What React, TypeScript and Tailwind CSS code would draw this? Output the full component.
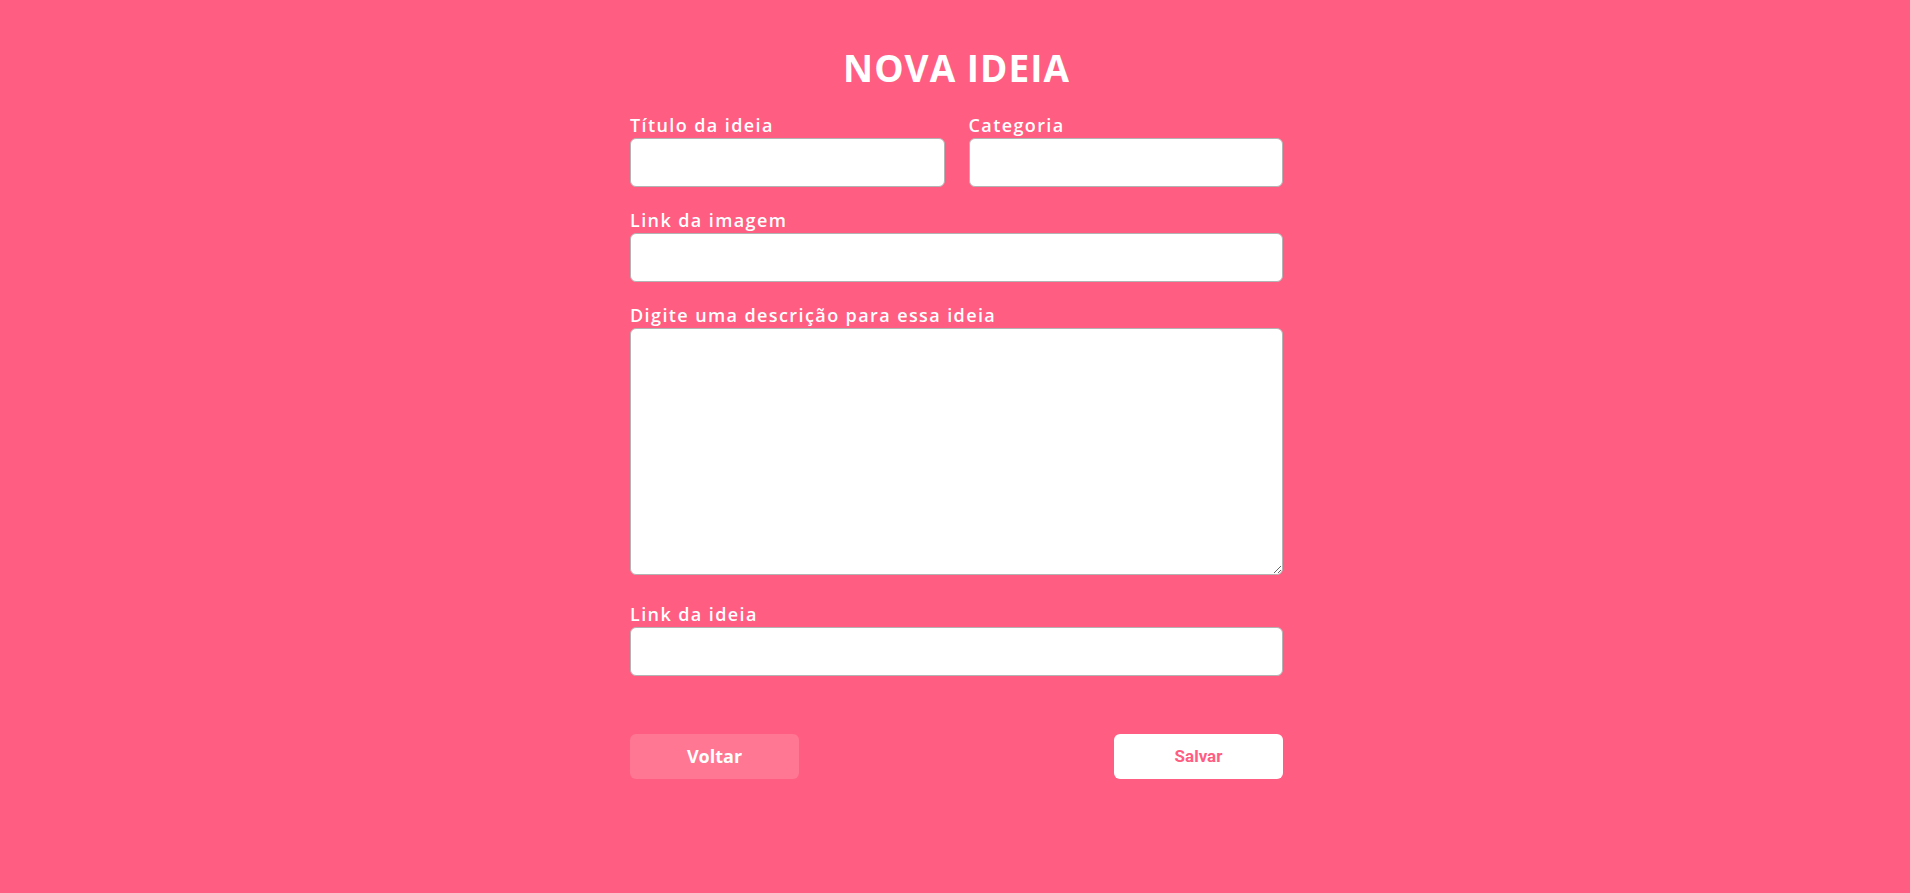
import React from "react";

const labelCls =
  "block h-[22px] whitespace-nowrap text-white font-semibold text-[18px] leading-[22px] tracking-[1.4px] [font-family:'Open_Sans',sans-serif]";
const inputCls =
  "block w-full h-[49px] bg-white rounded-[6px] border border-[#b3b3b3] outline-none mt-[2px]";

export default function App() {
  return (
    <div className="min-h-screen w-full bg-[#ff5e82]">
      <div className="flex justify-center pl-[3px]">
        <div className="w-[653px] pt-[46px]">
          <h1 className="text-center text-white font-bold text-[37px] leading-[44px] tracking-[1px] [font-family:'Open_Sans',sans-serif]">
            NOVA IDEIA
          </h1>
          <div className="mt-[24px] grid grid-cols-2 gap-x-[24px]">
            <div>
              <label className={labelCls}>Título da ideia</label>
              <input className={inputCls} />
            </div>
            <div>
              <label className={labelCls}>Categoria</label>
              <input className={inputCls} />
            </div>
          </div>
          <div className="mt-[22px]">
            <label className={labelCls}>Link da imagem</label>
            <input className={inputCls} />
          </div>
          <div className="mt-[22px]">
            <label className={labelCls}>Digite uma descrição para essa ideia</label>
            <textarea className="block w-full h-[247px] bg-white rounded-[6px] border border-[#b3b3b3] outline-none mt-[2px] resize-y" />
          </div>
          <div className="mt-[28px]">
            <label className={labelCls}>Link da ideia</label>
            <input className={inputCls} />
          </div>
          <div className="mt-[58px] flex justify-between">
            <button className="w-[169px] h-[45px] rounded-[6px] bg-[#ff7792] text-white font-bold text-[18px] leading-[45px] [font-family:'Open_Sans',sans-serif]">
              Voltar
            </button>
            <button className="w-[169px] h-[45px] rounded-[6px] bg-white text-[#ff5e82] font-bold text-[17px] leading-[45px] [font-family:'Roboto',sans-serif]">
              Salvar
            </button>
          </div>
        </div>
      </div>
    </div>
  );
}
